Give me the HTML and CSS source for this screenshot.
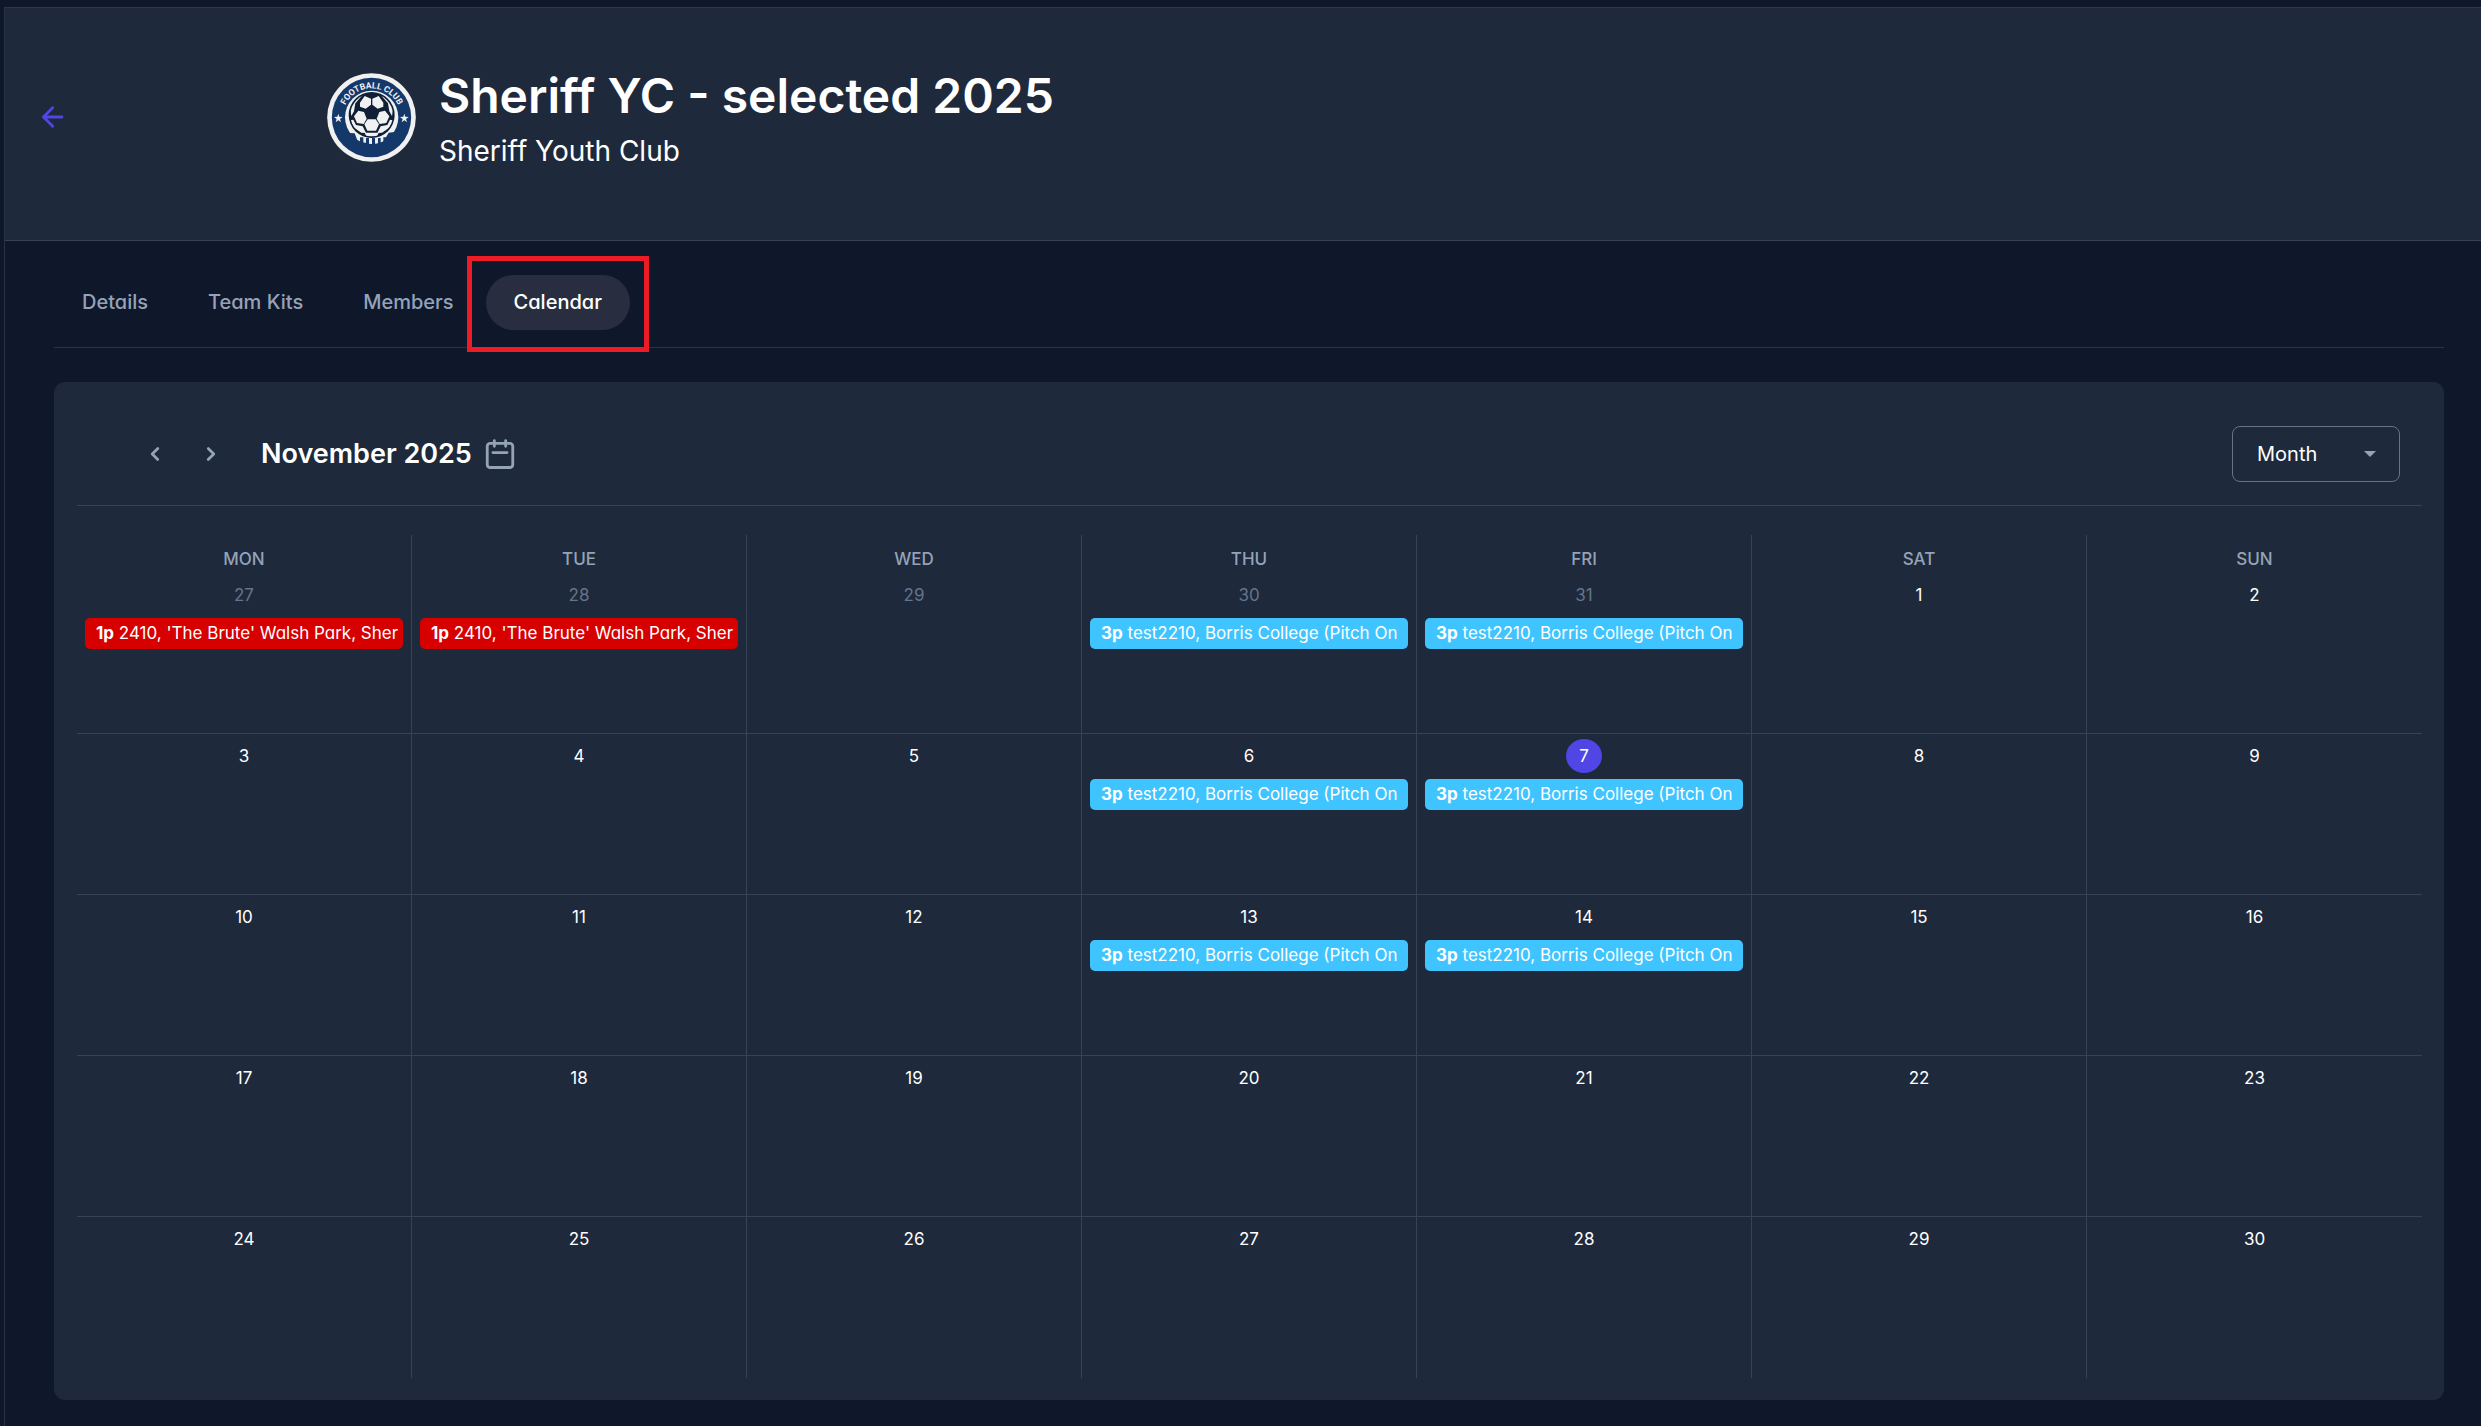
FILE: index.html
```html
<!DOCTYPE html>
<html lang="en">
<head>
  <meta charset="UTF-8" />
  <meta name="viewport" content="width=device-width, initial-scale=1.0"/>
  <title>Sheriff YC - selected 2025</title>
  <link rel="stylesheet" href="styles.css">
</head>
<body>
  <div class="page">
    <header class="team-header">
      <a href="#" class="back-link" aria-label="Back">
        <svg width="34" height="34" viewBox="0 0 24 24" fill="none" stroke="currentColor" stroke-width="2" stroke-linecap="round" stroke-linejoin="round"><path d="M19 12H6M12.500 5.500L6 12L12.500 18.500"/></svg>
      </a>
      <svg class="team-logo" viewBox="51 69 267 267" role="img" aria-label="Football Club">
        <defs>
          <path id="arc" d="M98 202a87 87 0 0 1 174 0a87 87 0 0 1 -174 0"/>
          <clipPath id="ball"><circle cx="185" cy="195" r="64"/></clipPath>
          <clipPath id="inner"><circle cx="185" cy="202" r="100"/></clipPath>
        </defs>
        <circle cx="184.500" cy="202.500" r="133" fill="#f1f1f1"/>
        <circle cx="184.500" cy="202.500" r="119" fill="#14386a"/>
        <circle cx="185" cy="202" r="80" fill="#f1f1f1"/>
        <path clip-path="url(#inner)" fill="#14386a" d="M100 248l34 2 10 26h6v-14h10v16h8v-14h9v18h9v-18h9v18h9v-18h8v14h8v-16h8l8-14 34-4v60H100z"/>
        <circle cx="185" cy="195" r="69" fill="#0f2036"/>
        <g clip-path="url(#ball)" fill="#f1f1f1">
          <path d="M150 158l14-20 19 8v18l-16 12-17-6z"/>
          <path d="M220 158l-14-20-19 8v18l16 12 17-6z"/>
          <path d="M145 182l17 4 8 20-9 16-20-3-9-20z"/>
          <path d="M225 182l-17 4-8 20 9 16 20-3 9-20z"/>
          <path d="M173 208h24l10 15-9 19h-26l-9-19z"/>
          <path d="M120 172l22-36 22-8-14 16-14 16-4 24-8 14z"/>
          <path d="M250 172l-22-36-22-8 14 16 14 16 4 24 8 14z"/>
          <path d="M120 211l10-2 8 16 20 4 10 20-14-1-24-16z"/>
          <path d="M250 211l-10-2-8 16-20 4-10 20 14-1 24-16z"/>
          <path d="M164 248h42l-6 14h-30z"/>
        </g>
        <path id="star" fill="#f1f1f1" d="M85 191l3 9 10 1-8 6 3 10-8-6-8 6 3-10-8-6 10-1z"/>
        <use href="#star" x="198"/>
        <text class="logo-text"><textPath href="#arc" startOffset="25%">FOOTBALL CLUB</textPath></text>
      </svg>
      <div class="team-info">
        <h1>Sheriff YC - selected 2025</h1>
        <p>Sheriff Youth Club</p>
      </div>
    </header>

    <main>
      <nav class="tabs">
        <a href="#" class="tab">Details</a>
        <a href="#" class="tab">Team Kits</a>
        <a href="#" class="tab">Members</a>
        <a href="#" class="tab active" aria-current="page">Calendar</a>
      </nav>

      <section class="calendar-card">
        <div class="toolbar">
          <button class="icon-btn" aria-label="Previous month">
            <svg width="28" height="28" viewBox="0 0 20 20" fill="currentColor"><path d="M12.700 5.300a1 1 0 010 1.400L9.400 10l3.300 3.300a1 1 0 01-1.400 1.400l-4-4a1 1 0 010-1.400l4-4a1 1 0 011.400 0z"/></svg>
          </button>
          <button class="icon-btn" aria-label="Next month">
            <svg width="28" height="28" viewBox="0 0 20 20" fill="currentColor"><path d="M7.300 14.700a1 1 0 010-1.400L10.600 10 7.300 6.700a1 1 0 011.400-1.400l4 4a1 1 0 010 1.400l-4 4a1 1 0 01-1.400 0z"/></svg>
          </button>
          <h2>November 2025</h2>
          <button class="icon-btn today-btn" aria-label="Go to today">
            <svg width="34" height="34" viewBox="0 0 24 24" fill="none" stroke="currentColor" stroke-width="2" stroke-linecap="round" stroke-linejoin="round"><path d="M8 2.500v4M16 2.500v4M7 11h10"/><rect x="3" y="4.500" width="18" height="17" rx="2"/></svg>
          </button>
          <div class="view-select">
            <select aria-label="View">
              <option>Month</option>
              <option>Week</option>
              <option>Day</option>
            </select>
          </div>
        </div>

        <table class="month">
          <thead>
            <tr><th>MON</th><th>TUE</th><th>WED</th><th>THU</th><th>FRI</th><th>SAT</th><th>SUN</th></tr>
          </thead>
          <tbody>
            <tr>
              <td class="other"><span class="day">27</span><a href="#" class="event red"><b>1p</b> 2410, 'The Brute' Walsh Park, Sher</a></td>
              <td class="other"><span class="day">28</span><a href="#" class="event red"><b>1p</b> 2410, 'The Brute' Walsh Park, Sher</a></td>
              <td class="other"><span class="day">29</span></td>
              <td class="other"><span class="day">30</span><a href="#" class="event"><b>3p</b> test2210, Borris College (Pitch On</a></td>
              <td class="other"><span class="day">31</span><a href="#" class="event"><b>3p</b> test2210, Borris College (Pitch On</a></td>
              <td><span class="day">1</span></td>
              <td><span class="day">2</span></td>
            </tr>
            <tr>
              <td><span class="day">3</span></td>
              <td><span class="day">4</span></td>
              <td><span class="day">5</span></td>
              <td><span class="day">6</span><a href="#" class="event"><b>3p</b> test2210, Borris College (Pitch On</a></td>
              <td><span class="day today">7</span><a href="#" class="event"><b>3p</b> test2210, Borris College (Pitch On</a></td>
              <td><span class="day">8</span></td>
              <td><span class="day">9</span></td>
            </tr>
            <tr>
              <td><span class="day">10</span></td>
              <td><span class="day">11</span></td>
              <td><span class="day">12</span></td>
              <td><span class="day">13</span><a href="#" class="event"><b>3p</b> test2210, Borris College (Pitch On</a></td>
              <td><span class="day">14</span><a href="#" class="event"><b>3p</b> test2210, Borris College (Pitch On</a></td>
              <td><span class="day">15</span></td>
              <td><span class="day">16</span></td>
            </tr>
            <tr>
              <td><span class="day">17</span></td>
              <td><span class="day">18</span></td>
              <td><span class="day">19</span></td>
              <td><span class="day">20</span></td>
              <td><span class="day">21</span></td>
              <td><span class="day">22</span></td>
              <td><span class="day">23</span></td>
            </tr>
            <tr>
              <td><span class="day">24</span></td>
              <td><span class="day">25</span></td>
              <td><span class="day">26</span></td>
              <td><span class="day">27</span></td>
              <td><span class="day">28</span></td>
              <td><span class="day">29</span></td>
              <td><span class="day">30</span></td>
            </tr>
          </tbody>
        </table>
      </section>
    </main>
  </div>
</body>
</html>
```
FILE: styles.css
```css
:root {
  --bg: #0f172a;
  --card-bg: #1e293b;
  --primary: #4f46e5;
  --line: #374357;
  --text: #ffffff;
  --muted: #94a3b8;
  --hint: #64748b;
}

* {
  box-sizing: border-box;
}

body {
  margin: 0;
  padding: 7px 0 0 4px;
  min-height: 100vh;
  background: var(--bg);
  color: var(--text);
  font-family: Inter, "Liberation Sans", sans-serif;
  font-size: 20px;
}

a {
  color: inherit;
  text-decoration: none;
}

h1, h2, p {
  margin: 0;
}

.page {
  border-left: 1px solid #273347;
  min-height: calc(100vh - 7px);
}

/* Header */
.team-header {
  display: flex;
  align-items: center;
  height: 234px;
  padding: 0 30px 14px;
  background: var(--card-bg);
  border-top: 1px solid #2c384b;
  border-bottom: 1px solid var(--line);
}

.back-link {
  display: flex;
  width: 292px;
  color: var(--primary);
}

.team-logo {
  width: 89px;
  height: 89px;
}

.logo-text {
  font-family: Roboto, "Liberation Sans", sans-serif;
  font-size: 26px;
  font-weight: 700;
  fill: #f1f1f1;
  text-anchor: middle;
}

.team-info {
  margin-left: 23px;
  padding-top: 4px;
}

.team-info h1 {
  font-size: 48px;
  font-weight: 600;
  line-height: 64px;
}

.team-info p {
  font-size: 28px;
  line-height: 46px;
}

/* Tabs */
main {
  padding: 34px 37px 24px 49px;
}

.tabs {
  display: flex;
  gap: 4px;
  padding-bottom: 17px;
  border-bottom: 1px solid #273347;
}

.tab {
  padding: 0 28px;
  border-radius: 28px;
  color: var(--muted);
  font-weight: 500;
  line-height: 55px;
  font-feature-settings: "cv11";
}

.tab.active {
  background: #282e40;
  color: var(--text);
  position: relative;
}

.tab.active::after {
  content: "";
  position: absolute;
  inset: -19px -19px -22px;
  border: 5px solid #ed1c24;
}

/* Calendar */
.calendar-card {
  margin-top: 34px;
  padding: 0 22px 22px 23px;
  background: var(--card-bg);
  border-radius: 11px;
}

.toolbar {
  display: flex;
  align-items: center;
  height: 124px;
  padding: 20px 22px 0 50px;
  border-bottom: 1px solid var(--line);
}

.icon-btn {
  display: flex;
  align-items: center;
  justify-content: center;
  width: 56px;
  height: 56px;
  padding: 0;
  background: none;
  border: none;
  color: var(--muted);
  cursor: pointer;
}

.toolbar h2 {
  margin-left: 22px;
  font-size: 27px;
  font-weight: 600;
}

.view-select {
  position: relative;
  margin-left: auto;
}

.view-select select {
  appearance: none;
  width: 168px;
  height: 56px;
  padding: 0 24px;
  background: none;
  border: 1px solid var(--hint);
  border-radius: 8px;
  color: var(--text);
  font-family: inherit;
  font-size: 20px;
}

.view-select::after {
  content: "";
  position: absolute;
  top: 25px;
  right: 24px;
  border: 6px solid transparent;
  border-top-color: var(--muted);
  pointer-events: none;
}

.month {
  width: 100%;
  margin-top: 29px;
  table-layout: fixed;
  border-collapse: separate;
  border-spacing: 0;
  font-size: 17px;
}

.month th, .month td {
  padding: 0;
  border-right: 1px solid var(--line);
  text-align: center;
  vertical-align: top;
}

.month th:last-child, .month td:last-child {
  border-right: none;
}

.month th {
  height: 38px;
  padding-top: 13px;
  color: var(--muted);
  font-weight: 500;
  line-height: 22px;
}

.month td {
  height: 161px;
  padding: 5px 8px 0;
  border-bottom: 1px solid var(--line);
}

.month tr:last-child td {
  border-bottom: none;
}

.day {
  display: block;
  width: 36px;
  margin: 0 auto;
  line-height: 34px;
}

.other .day {
  color: var(--hint);
}

.day.today {
  background: var(--primary);
  border-radius: 50%;
}

.event {
  display: block;
  margin-top: 6px;
  padding: 0 2px 0 11px;
  background: #40c4ff;
  border-radius: 5px;
  line-height: 31px;
  text-align: left;
  white-space: nowrap;
  font-feature-settings: "cv11";
}

.event.red {
  background: #d60000;
}
```
